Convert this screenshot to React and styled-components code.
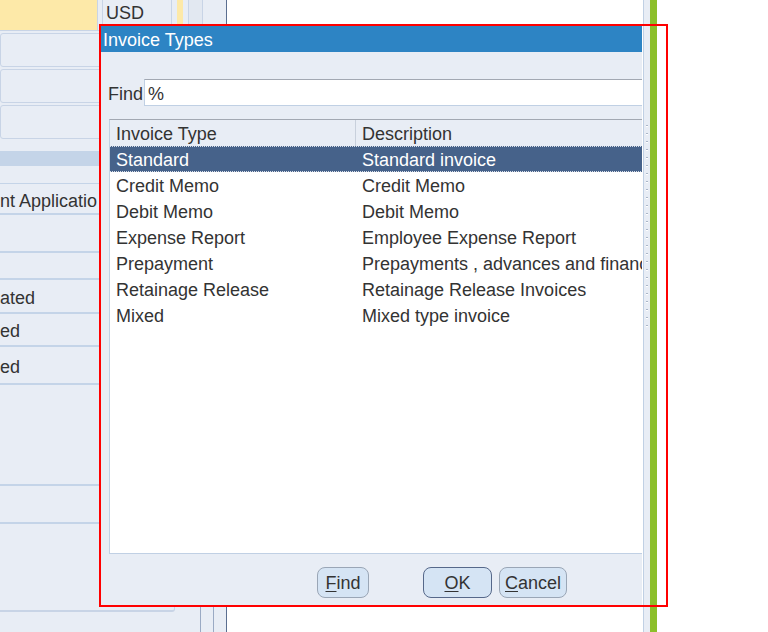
import styled, { createGlobalStyle } from "styled-components"

const GlobalStyle = createGlobalStyle`
  html, body {
    margin: 0;
    padding: 0;
    background: #ffffff;
  }
  #root {
    width: 768px;
    height: 632px;
    overflow: hidden;
  }
`

const types = [
    { type: "Standard", desc: "Standard invoice" },
    { type: "Credit Memo", desc: "Credit Memo" },
    { type: "Debit Memo", desc: "Debit Memo" },
    { type: "Expense Report", desc: "Employee Expense Report" },
    { type: "Prepayment", desc: "Prepayments , advances and financing" },
    { type: "Retainage Release", desc: "Retainage Release Invoices" },
    { type: "Mixed", desc: "Mixed type invoice" },
]

const App = () => {
    return (
        <Page>
            <GlobalStyle />
            <Backdrop>
                <FormColumn>
                    <TopRow>
                        <YellowField />
                        <UsdField>USD</UsdField>
                    </TopRow>
                    <Field />
                    <Field />
                    <Field />
                    <Band />
                    <ListRow $h={32} $top>nt Applicatio</ListRow>
                    <ListRow $h={38} />
                    <ListRow $h={27} />
                    <ListRow $h={34}>ated</ListRow>
                    <ListRow $h={33}>ed</ListRow>
                    <ListRow $h={38}>ed</ListRow>
                    <ListRow $h={101} />
                    <ListRow $h={38} />
                    <BottomBox />
                </FormColumn>
                <Gutter>
                    <GutterTop>
                        <MiniYellow />
                        <MiniButton />
                    </GutterTop>
                    <GutterLines>
                        <GutterCell />
                        <GutterCell />
                    </GutterLines>
                </Gutter>
                <Canvas $w={416} />
                <Strip>
                    <Ticks />
                </Strip>
                <GreenBar />
                <Canvas />
            </Backdrop>

            <DialogClip>
                <Dialog>
                    <TitleBar>Invoice Types</TitleBar>
                    <FindRow>
                        <FindLabel>Find</FindLabel>
                        <FindInput>%</FindInput>
                    </FindRow>
                    <Table>
                        <HeaderRow>
                            <HeadCell $w={246}>Invoice Type</HeadCell>
                            <HeadCell>Description</HeadCell>
                        </HeaderRow>
                        {types.map((t, i) => (
                            <DataRow key={t.type} $selected={i === 0}>
                                <DataCell $w={246}>{t.type}</DataCell>
                                <DataCell>{t.desc}</DataCell>
                            </DataRow>
                        ))}
                    </Table>
                    <Footer>
                        <Button $w={52}>
                            <u>F</u>ind
                        </Button>
                        <Button $w={69} $default style={{ marginLeft: 54 }}>
                            <u>O</u>K
                        </Button>
                        <Button $w={68} style={{ marginLeft: 7 }}>
                            <u>C</u>ancel
                        </Button>
                    </Footer>
                </Dialog>
            </DialogClip>
            <Highlight />
        </Page>
    )
}

const Page = styled.div`
  position: relative;
  width: 768px;
  height: 632px;
  font-family: "Liberation Sans", Arial, sans-serif;
  font-size: 18px;
  color: #333333;
`

const Backdrop = styled.div`
  display: flex;
  height: 100%;
`

const FormColumn = styled.div`
  width: 175px;
  display: flex;
  flex-direction: column;
  background: #e8edf5;
`

const TopRow = styled.div`
  display: flex;
  height: 30px;
  border-bottom: 1px solid #c8d4e6;
`

const YellowField = styled.div`
  width: 97px;
  background: #fde9a8;
  border-right: 1px solid #c8d4e6;
`

const UsdField = styled.div`
  margin-left: 4px;
  width: 70px;
  padding-left: 3px;
  line-height: 26px;
  border-left: 1px solid #c8d4e6;
  border-right: 1px solid #c8d4e6;
  box-sizing: border-box;
`

const Field = styled.div`
  height: 34px;
  margin-top: 2px;
  border: 1px solid #c8d4e6;
  border-radius: 3px;
  box-sizing: border-box;
`

const Band = styled.div`
  height: 15px;
  margin-top: 12px;
  margin-bottom: 17px;
  background: #c4d4e8;
`

const ListRow = styled.div`
  height: ${({ $h }) => $h}px;
  box-sizing: border-box;
  border-top: ${({ $top }) => ($top ? "1px solid #c4d4e8" : "none")};
  border-bottom: 2px solid #c4d4e8;
  padding-top: 2px;
  line-height: ${({ $h }) => $h - 2}px;
  white-space: nowrap;
`

const BottomBox = styled.div`
  height: 88px;
  border-bottom: 2px solid #c8d4e6;
  border-right: 1px solid #c8d4e6;
  border-bottom-right-radius: 3px;
  box-sizing: border-box;
`

const Gutter = styled.div`
  width: 51px;
  display: flex;
  flex-direction: column;
  justify-content: space-between;
  background: #e8edf5;
  border-right: 1px solid #5a6e90;
`

const GutterTop = styled.div`
  display: flex;
  height: 26px;
  padding-left: 2px;
  gap: 5px;
`

const MiniYellow = styled.div`
  width: 6px;
  background: #fde9a8;
`

const MiniButton = styled.div`
  width: 13px;
  border-left: 1px solid #c8d4e6;
  border-right: 1px solid #c8d4e6;
  background: #e2e8f1;
`

const GutterLines = styled.div`
  display: flex;
  height: 30px;
  padding-left: 25px;
`

const GutterCell = styled.div`
  flex: 1;
  border-left: 1px solid #9aaac4;
`

const Canvas = styled.div`
  ${({ $w }) => ($w ? `width: ${$w}px;` : "flex: 1;")}
  background: #ffffff;
`

const Strip = styled.div`
  width: 6px;
  background: #e8edf5;
  border-left: 1px solid #c0d0e4;
  padding-top: 125px;
`

const Ticks = styled.div`
  height: 206px;
  margin-left: 2px;
  width: 2px;
  background: repeating-linear-gradient(
    to bottom,
    #aab6c8 0px,
    #aab6c8 1px,
    #ffffff 1px,
    #ffffff 2px,
    transparent 2px,
    transparent 8px
  );
`

const GreenBar = styled.div`
  width: 7px;
  background: #8cbf2a;
`

const DialogClip = styled.div`
  position: absolute;
  left: 101px;
  top: 26px;
  width: 541px;
  height: 579px;
  overflow: hidden;
`

const Dialog = styled.div`
  width: 620px;
  height: 579px;
  display: flex;
  flex-direction: column;
  background: #e8edf5;
`

const TitleBar = styled.div`
  height: 26px;
  box-sizing: border-box;
  padding: 2px 0 0 2px;
  line-height: 24px;
  background: #2d84c4;
  color: #ffffff;
`

const FindRow = styled.div`
  display: flex;
  align-items: center;
  height: 27px;
  margin-top: 27px;
  padding-left: 7px;
`

const FindLabel = styled.span`
  width: 36px;
  padding-top: 3px;
`

const FindInput = styled.div`
  flex: 1;
  height: 27px;
  line-height: 24px;
  padding: 2px 0 0 3px;
  box-sizing: border-box;
  background: #ffffff;
  border: 1px solid #c0d0e4;
  border-top-color: #a2a8b2;
  border-right: none;
`

const Table = styled.div`
  margin: 13px 0 0 8px;
  height: 435px;
  box-sizing: border-box;
  background: #ffffff;
  border-left: 1px solid #c0d0e4;
  border-top: 1px solid #a2a8b2;
  border-bottom: 1px solid #c0d0e4;
`

const HeaderRow = styled.div`
  display: flex;
  height: 26px;
  background: #e8edf5;
`

const HeadCell = styled.div`
  ${({ $w }) => ($w ? `width: ${$w}px; border-right: 1px solid #c8d0dc;` : "flex: 1;")}
  box-sizing: border-box;
  padding: 2px 0 0 6px;
  line-height: 24px;
  white-space: nowrap;
`

const DataRow = styled.div`
  display: flex;
  height: 26px;
  box-sizing: border-box;
  background: ${({ $selected }) => ($selected ? "#46628a" : "transparent")};
  color: ${({ $selected }) => ($selected ? "#ffffff" : "#333333")};
  border: 1px dotted ${({ $selected }) => ($selected ? "#d8dee8" : "transparent")};
  border-left: none;
`

const DataCell = styled.div`
  ${({ $w }) => ($w ? `width: ${$w}px;` : "flex: 1;")}
  box-sizing: border-box;
  padding: 2px 0 0 6px;
  line-height: 22px;
  white-space: nowrap;
  overflow: hidden;
`

const Footer = styled.div`
  display: flex;
  align-items: flex-start;
  flex: 1;
  padding: 13px 0 0 216px;
`

const Button = styled.div`
  width: ${({ $w }) => $w}px;
  height: 31px;
  box-sizing: border-box;
  display: flex;
  align-items: center;
  justify-content: center;
  padding-top: 2px;
  background: #d5e4f4;
  border: 1px solid ${({ $default }) => ($default ? "#56688a" : "#9aa6b6")};
  border-radius: 8px;
  color: #333333;

  u {
    text-decoration-thickness: 1px;
    text-underline-offset: 2px;
  }
`

const Highlight = styled.div`
  position: absolute;
  left: 99px;
  top: 24px;
  width: 569px;
  height: 583px;
  box-sizing: border-box;
  border: 2px solid #ff0000;
  pointer-events: none;
`

export default App
